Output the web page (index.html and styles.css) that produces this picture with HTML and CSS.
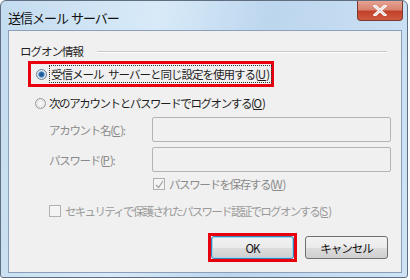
FILE: index.html
```html
<!DOCTYPE html>
<html lang="ja">
<head>
    <meta charset="UTF-8">
    <title>送信メール サーバー</title>
    <link rel="stylesheet" href="styles.css">
</head>
<body>
    <div class="window">
        <div class="titlebar">
            <span class="title">送信メール サーバー</span>
            <span class="close">
                <svg width="14" height="11" viewBox="0 0 14 11"><path d="M2 1 L12 10 M12 1 L2 10" stroke="#fff" stroke-width="3" stroke-linecap="square"/><path d="M2 1 L12 10 M12 1 L2 10" stroke="#5a2a20" stroke-width="0.6" opacity="0.4"/></svg>
            </span>
        </div>
        <div class="client">
            <div class="group-head">
                <span>ログオン情報</span>
                <span class="group-line"></span>
            </div>
            <div class="highlight">
                <label class="option">
                    <span class="radio checked"></span>
                    <span class="focus">受信メール サーバーと同じ設定を使用する(<u>U</u>)</span>
                </label>
            </div>
            <label class="option second">
                <span class="radio"></span>
                <span>次のアカウントとパスワードでログオンする(<u>O</u>)</span>
            </label>
            <div class="field">
                <span class="field-label">アカウント名(<u>C</u>):</span>
                <span class="input"></span>
            </div>
            <div class="field">
                <span class="field-label">パスワード(<u>P</u>):</span>
                <span class="input"></span>
            </div>
            <label class="save-row">
                <span class="check checked">
                    <svg width="9" height="9" viewBox="0 0 9 9"><path d="M1 5 L3.5 7.5 L8 1" fill="none" stroke="#a0a0a0" stroke-width="1.2"/></svg>
                </span>
                <span>パスワードを保存する(<u>W</u>)</span>
            </label>
            <label class="secure-row">
                <span class="check"></span>
                <span>セキュリティで保護されたパスワード認証でログオンする(<u>S</u>)</span>
            </label>
            <div class="buttons">
                <span class="ok-wrap"><button class="btn ok">OK</button></span>
                <button class="btn">キャンセル</button>
            </div>
        </div>
    </div>
</body>
</html>
```

FILE: styles.css
```css
body { margin: 0; background: #fff; font-family: "Noto Sans CJK JP", "Noto Sans", sans-serif; font-size: 11.5px; color: #1e1e1e; }
u { letter-spacing: 0; }
label, .field { white-space: nowrap; }
.window { width: 406px; height: 276px; border: 1px solid #5f6f80; border-radius: 6px 6px 3px 3px; background: linear-gradient(100deg, #c4dcf0 0%, #d8eaf8 35%, #bcd6ee 60%, #cfe3f5 100%); display: flex; flex-direction: column; box-sizing: content-box; }
.titlebar { height: 29px; display: flex; justify-content: space-between; align-items: flex-start; }
.title { font-size: 13px; letter-spacing: -1px; word-spacing: 1px; color: #111; margin: 7px 0 0 7px; }
.close { width: 44px; height: 19px; margin-right: 4px; border: 1px solid #7a3a30; border-top: none; border-radius: 0 0 4px 4px; background: linear-gradient(#e6a292 0%, #d88470 45%, #c2412a 55%, #d05a40 100%); display: flex; align-items: center; justify-content: center; }
.client { flex: 1; margin: 0 5px 4px 7px; background: #f0f0f0; border: 1px solid #8ba0b8; display: flex; flex-direction: column; }
.group-head { display: flex; align-items: center; margin: 11px 14px 0 11px; height: 18px; }
.group-head .group-line { flex: 1; height: 0; border-top: 1px solid #c8c8c8; border-bottom: 1px solid #fff; margin-left: 14px; margin-top: 1px; }
.group-head span:first-child { letter-spacing: -1px; }
.highlight { margin: 1px 0 0 19px; width: 240px; height: 20px; border: 3px solid #e8000f; display: flex; align-items: center; }
.option { display: flex; align-items: center; letter-spacing: -1.4px; }
.highlight .option { margin-left: 5px; letter-spacing: -1px; word-spacing: 3px; }
.second { margin: 8px 0 0 26px; }
.radio { width: 11px; height: 11px; border-radius: 50%; border: 1px solid #9a9a9a; background: radial-gradient(#fafafa, #dcdcdc); margin-right: 3px; box-sizing: border-box; flex: none; }
.radio.checked { background: radial-gradient(circle, #1e4a7a 0, #2f73b8 2.5px, #d8e6f2 3.5px, #e8e8e8 100%); border-color: #6a7c90; }
.focus { outline: 1px dotted #333; outline-offset: 0; padding: 0 2px 0 1px; }
.field { display: flex; align-items: center; margin: 6px 0 0 40px; color: #8a8a8a; letter-spacing: -1.3px; }
.field + .field { margin-top: 5px; }
.field-label { width: 103px; }
.input { width: 237px; height: 23px; border: 1px solid #b4b4b4; border-radius: 2px; background: #f0f0f0; }
.check { width: 12px; height: 12px; border: 1px solid #b0b0b0; background: #f4f4f4; box-sizing: border-box; display: flex; align-items: center; justify-content: center; margin-right: 4px; flex: none; }
.save-row { display: flex; align-items: center; margin: 4px 0 0 144px; letter-spacing: -1.4px; color: #8a8a8a; }
.secure-row { display: flex; align-items: center; margin: 11px 0 0 40px; letter-spacing: -1.7px; color: #9a9a9a; }
.buttons { display: flex; align-items: center; margin: 14px 0 0 199px; gap: 8px; }
.ok-wrap { border: 3px solid #e8000f; display: flex; }
.btn { font-family: inherit; font-size: 11.5px; letter-spacing: -1px; color: #111; width: 83px; height: 23px; border: 1px solid #707070; border-radius: 3px; background: linear-gradient(#f2f2f2 0%, #ebebeb 50%, #dddddd 51%, #cfcfcf 100%); padding: 0; }
.btn.ok { border-color: #3c7fb1; box-shadow: inset 0 0 0 1px #9fd6f0; }
```
